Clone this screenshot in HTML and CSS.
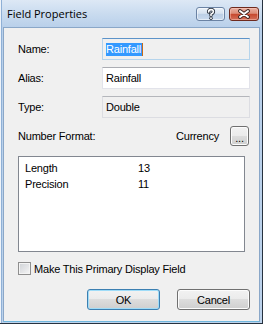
FILE: index.html
```html
<!DOCTYPE html>
<html>
<head>
<meta charset="utf-8">
<link rel="stylesheet" href="styles.css">
</head>
<body>
<div class="window">
  <div class="titlebar">
    <span class="title">Field Properties</span>
    <div class="caption-btns">
      <span class="cap help">
        <svg width="10" height="12" viewBox="0 0 10 12">
          <path d="M2.6 4 Q2.6 1.6 5 1.6 Q7.4 1.6 7.4 3.8 Q7.4 5.2 5 6.2 L5 7.6" fill="none" stroke="#2c3440" stroke-width="3.4" stroke-linecap="round"/>
          <circle cx="5" cy="10.2" r="1.7" fill="#2c3440"/>
          <path d="M2.6 4 Q2.6 1.6 5 1.6 Q7.4 1.6 7.4 3.8 Q7.4 5.2 5 6.2 L5 7.6" fill="none" stroke="#fff" stroke-width="1.6" stroke-linecap="round"/>
          <circle cx="5" cy="10.2" r="0.9" fill="#fff"/>
        </svg>
      </span>
      <span class="cap close">
        <svg width="14" height="10" viewBox="0 0 14 10">
          <path d="M3 2 L11 8 M11 2 L3 8" stroke="#3b2420" stroke-width="3.8" stroke-linecap="round"/>
          <path d="M3 2 L11 8 M11 2 L3 8" stroke="#fff" stroke-width="2" stroke-linecap="round"/>
        </svg>
      </span>
    </div>
  </div>
  <div class="client">
    <div class="form">
      <span class="lbl">Name:</span>
      <div class="field focused"><span class="sel">Rainfall</span><span class="caret"></span></div>
      <span class="lbl">Alias:</span>
      <div class="field">Rainfall</div>
      <span class="lbl">Type:</span>
      <div class="field readonly">Double</div>
    </div>
    <div class="numfmt">
      <span class="nf-label">Number Format:</span>
      <span class="cur">Currency</span>
      <span class="btn dots">...</span>
    </div>
    <div class="list">
      <div class="row"><span class="k">Length</span><span>13</span></div>
      <div class="row"><span class="k">Precision</span><span>11</span></div>
    </div>
    <div class="check"><span class="box"></span><span>Make This Primary Display Field</span></div>
    <div class="buttons">
      <span class="btn push default">OK</span>
      <span class="btn push">Cancel</span>
    </div>
  </div>
</div>
</body>
</html>
```
FILE: styles.css
```css
html, body {
  margin: 0;
  padding: 0;
  background: #ffffff;
}

.window {
  width: 262px;
  height: 323px;
  border-right: 1px solid #27323f;
  border-bottom: 1px solid #27323f;
  background: linear-gradient(#dde8f5 0px, #c9dbef 14px, #b9d0ea 27px, #bcd2eb 100%);
  display: flex;
  flex-direction: column;
  box-shadow: inset 1px 0 0 #eef3f9, inset 2px 0 0 #8fb0d6;
  font-family: "Liberation Sans", Arial, sans-serif;
  font-size: 11px;
  letter-spacing: -0.2px;
  color: #000;
}

.titlebar {
  height: 27px;
  display: flex;
  align-items: flex-start;
  justify-content: space-between;
  flex: none;
}

.title {
  font-family: "Open Sans", "Noto Sans", sans-serif;
  font-size: 11px;
  letter-spacing: 0;
  padding-left: 7px;
  line-height: 27px;
  color: #000;
}

.caption-btns {
  display: flex;
  gap: 4px;
  padding-top: 7px;
  padding-right: 3px;
}

.cap {
  height: 14px;
  border-radius: 3px;
  display: flex;
  align-items: center;
  justify-content: center;
  box-sizing: border-box;
}

.cap.help {
  width: 29px;
  border: 1px solid #6b83a4;
  background: linear-gradient(#eaf1f9 0%, #d6e2f0 45%, #bccfe6 50%, #c9daee 100%);
  box-shadow: inset 0 0 0 1px rgba(255,255,255,0.5);
}

.cap.close {
  width: 30px;
  border: 1px solid #6e2a1e;
  background: linear-gradient(#eab0a2 0%, #dc8c77 45%, #c6472d 50%, #d4705a 100%);
  box-shadow: inset 0 0 0 1px rgba(255,210,200,0.45);
}

.client {
  flex: 1;
  margin: 0 2px 1px 3px;
  background: #f0f0f0;
  border: 1px solid #8aa7c8;
  border-bottom-color: #6fb7de;
  padding: 10px 0 0 14px;
}

.form {
  display: grid;
  grid-template-columns: 84px 148px;
  grid-auto-rows: 22px;
  row-gap: 7px;
  align-items: center;
}

.field {
  height: 22px;
  box-sizing: border-box;
  border: 1px solid #e2e3ea;
  border-top-color: #abadb3;
  background: #ffffff;
  padding-left: 3px;
  line-height: 20px;
  display: flex;
  align-items: center;
}

.field.focused {
  background: #f0f0f0;
  border-color: #b5d4ec;
  border-top-color: #5c93c9;
}

.field.readonly {
  background: #f0f0f0;
  border-color: #dcdde2;
  border-top-color: #b4b6bb;
}

.sel {
  background: #3399ff;
  color: #fff;
  line-height: 13px;
  padding-right: 1px;
}

.caret {
  width: 1px;
  height: 13px;
  background: #c86a16;
}

.numfmt {
  display: flex;
  align-items: center;
  height: 20px;
  width: 231px;
  margin-top: 8px;
}

.nf-label {
  flex: 1;
}

.cur {
  margin-right: 11px;
}

.btn {
  box-sizing: border-box;
  border: 1px solid #707070;
  border-radius: 3px;
  background: linear-gradient(#f2f2f2 0%, #ebebeb 50%, #dddddd 50%, #cfcfcf 100%);
  box-shadow: inset 0 0 0 1px #fcfcfc;
  display: flex;
  align-items: center;
  justify-content: center;
}

.dots {
  width: 19px;
  height: 20px;
  line-height: 1;
  padding-top: 4px;
}

.list {
  margin-top: 10px;
  width: 227px;
  height: 96px;
  box-sizing: border-box;
  border: 1px solid #828790;
  background: #ffffff;
  padding: 3px 0 0 6px;
}

.row {
  display: flex;
  height: 16px;
  line-height: 16px;
}

.k {
  width: 113px;
}

.check {
  margin-top: 10px;
  display: flex;
  align-items: center;
  gap: 3px;
  height: 13px;
}

.box {
  width: 13px;
  height: 13px;
  box-sizing: border-box;
  border: 1px solid #8f8f8f;
  background: linear-gradient(135deg, #cfd2d6 0%, #e6e7e9 60%, #f7f7f7 100%);
  box-shadow: inset 0 0 0 1px #f4f4f4;
}

.buttons {
  margin-top: 14px;
  width: 232px;
  display: flex;
  justify-content: flex-end;
  gap: 17px;
}

.push {
  width: 73px;
  height: 21px;
}

.push.default {
  border-color: #3c7fb1;
  box-shadow: inset 0 0 0 1px #9fdcf8;
}
```
